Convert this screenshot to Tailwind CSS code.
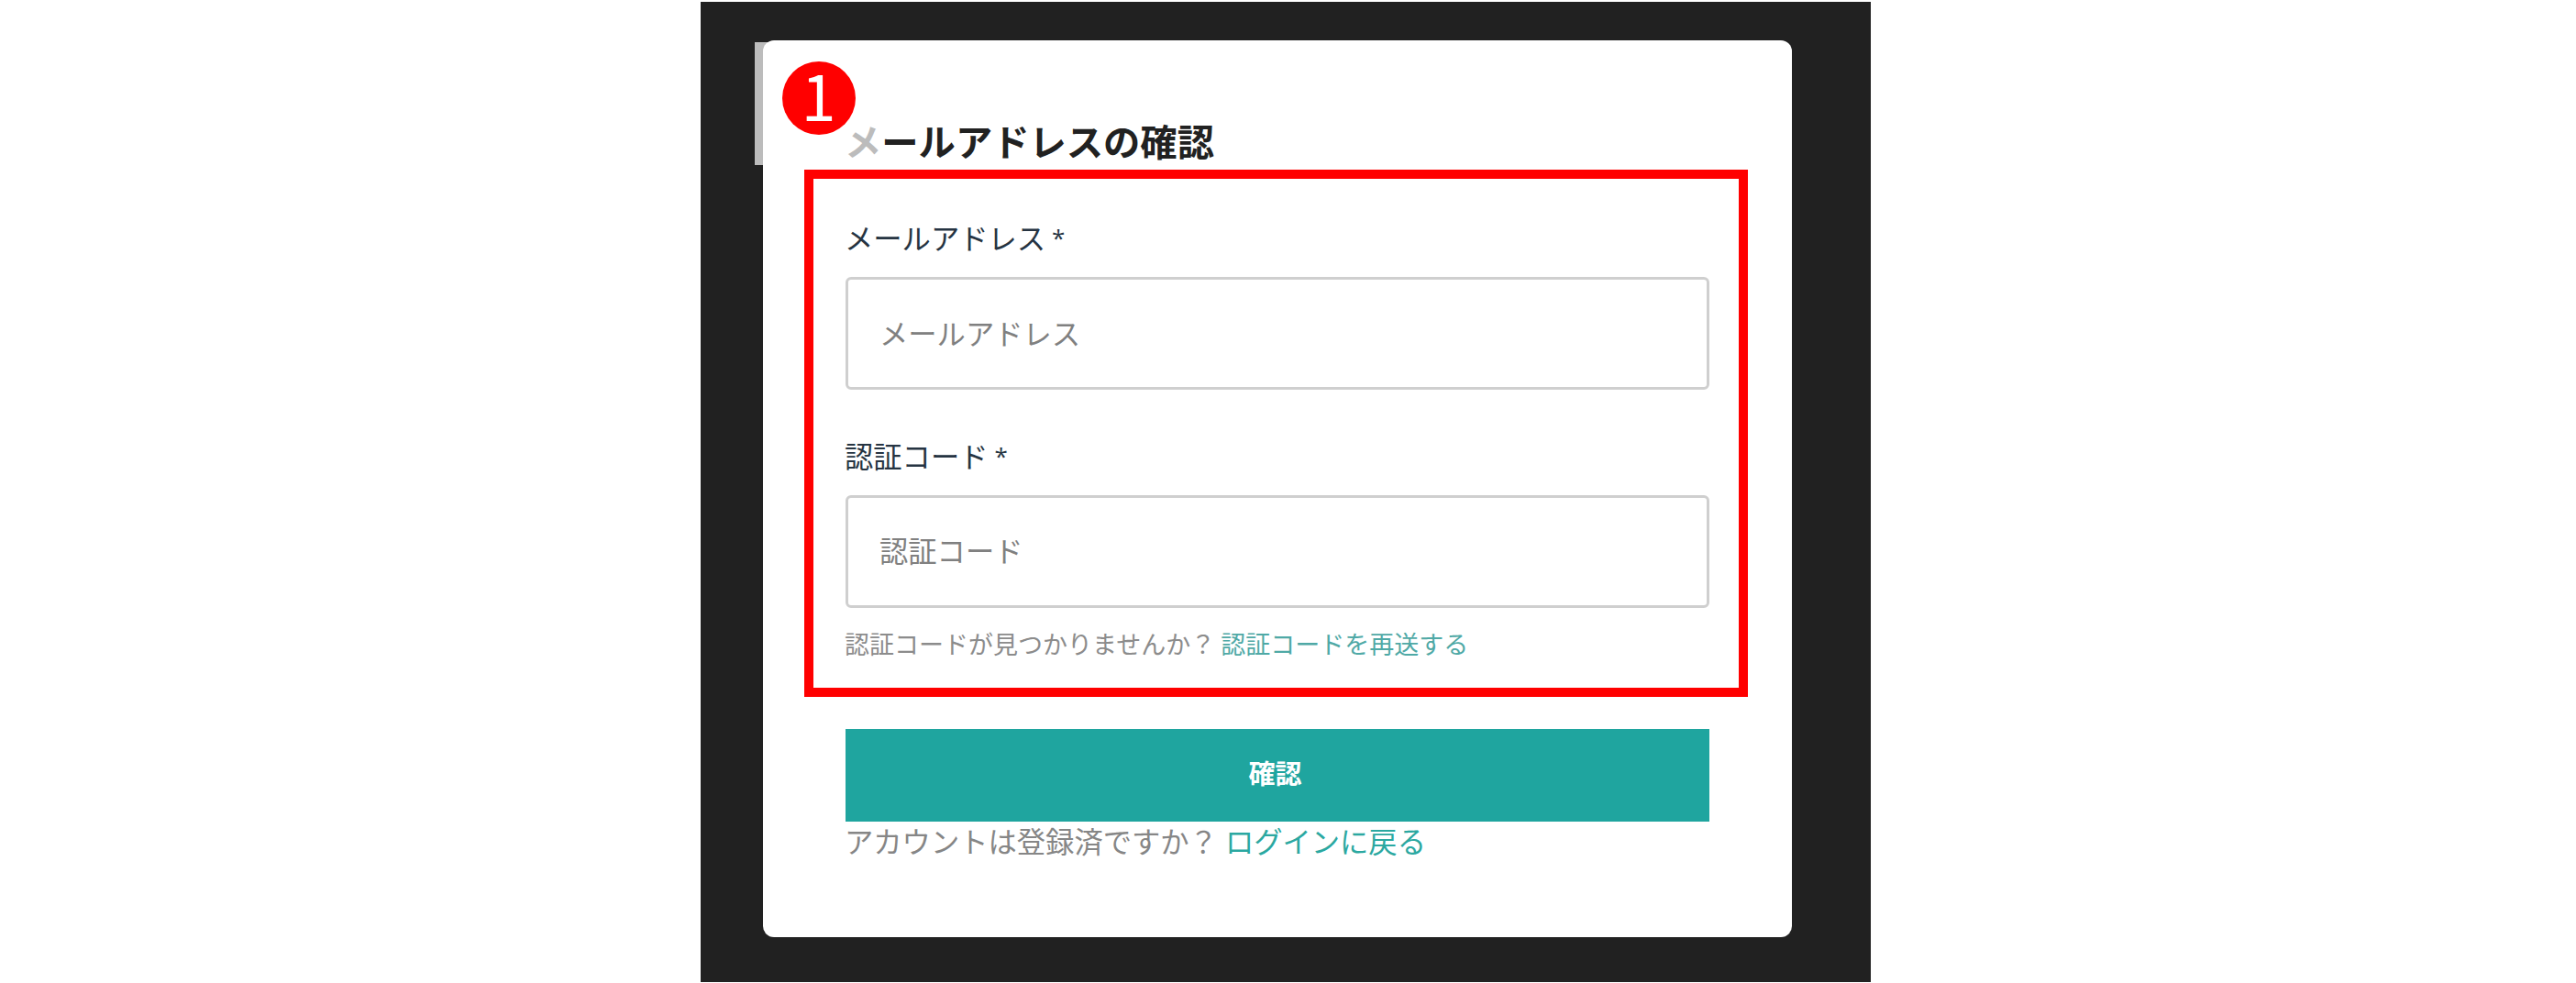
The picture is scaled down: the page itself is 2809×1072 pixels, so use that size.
<!DOCTYPE html>
<html lang="ja">
<head>
  <meta charset="UTF-8" />
  <meta name="viewport" content="width=device-width, initial-scale=1.0" />
  <title>メールアドレスの確認</title>
  <script src="https://cdn.jsdelivr.net/npm/@tailwindcss/browser@4"></script>
</head>
<body class="bg-white h-[1072px] overflow-hidden pt-[2px] pl-[764px] font-['Noto_Sans_CJK_JP',sans-serif]">
  <div class="relative w-[1276px] h-[1069px] bg-[#212121] pt-[42px] pl-[68px]">
    <div class="w-[1122px] h-[978px] bg-white rounded-xl px-[90px] pt-[79px]">
      <h2 class="text-[40.3px] leading-[60px] font-bold text-[#212121] -ml-px">メールアドレスの確認</h2>
      <form>
        <label for="email" class="flex items-center h-[40px] mt-[56px] -ml-px text-[31.3px] leading-[40px] text-[#263442]">メールアドレス<span class="ml-[7px] text-[26px] font-['Open_Sans']">*</span></label>
        <input id="email" type="text" placeholder="メールアドレス"
          class="block mt-[23px] w-[942px] h-[123px] px-[34px] pb-[3px] border-3 border-[#cfcfcf] rounded-md text-[31.3px] placeholder:text-[#808080]" />

        <label for="code" class="flex items-center h-[40px] mt-[52px] -ml-px text-[31.3px] leading-[40px] text-[#263442]">認証コード<span class="ml-[7px] text-[26px] font-['Open_Sans']">*</span></label>
        <input id="code" type="text" placeholder="認証コード"
          class="block mt-[23px] w-[942px] h-[123px] px-[34px] pb-[4px] border-3 border-[#cfcfcf] rounded-md text-[31.3px] placeholder:text-[#808080]" />
        <p class="mt-[19px] -ml-px h-[40px] text-[27px] leading-[40px] text-[#8c8c8c] whitespace-nowrap">認証コードが見つかりませんか？<a href="#" class="ml-[6px] text-[#4fa9a6]">認証コードを再送する</a></p>

        <button type="button" class="block mt-[73px] w-[942px] h-[101px] pr-[5px] pb-[6px] bg-[#1fa59f] text-white text-[29px] font-bold">確認</button>
        <p class="mt-px -ml-px h-[40px] text-[31.3px] leading-[40px] text-[#868686] whitespace-nowrap">アカウントは登録済ですか？<a href="#" class="ml-[8px] text-[#2ba8a1]">ログインに戻る</a></p>
      </form>
    </div>

    <!-- Step annotation: translucent backing, number and outline -->
    <div class="absolute left-[59px] top-[44px] w-[137px] h-[134px] bg-white/70"></div>
    <div class="absolute left-[88.5px] top-[65px] w-[80px] h-[80px] rounded-full bg-[#ff0000] flex items-center justify-center pb-[8px] text-white text-[68px] leading-[72px]">1</div>
    <div class="absolute left-[113px] top-[183px] w-[1029px] h-[575px] border-10 border-[#ff0000]"></div>
  </div>
</body>
</html>
